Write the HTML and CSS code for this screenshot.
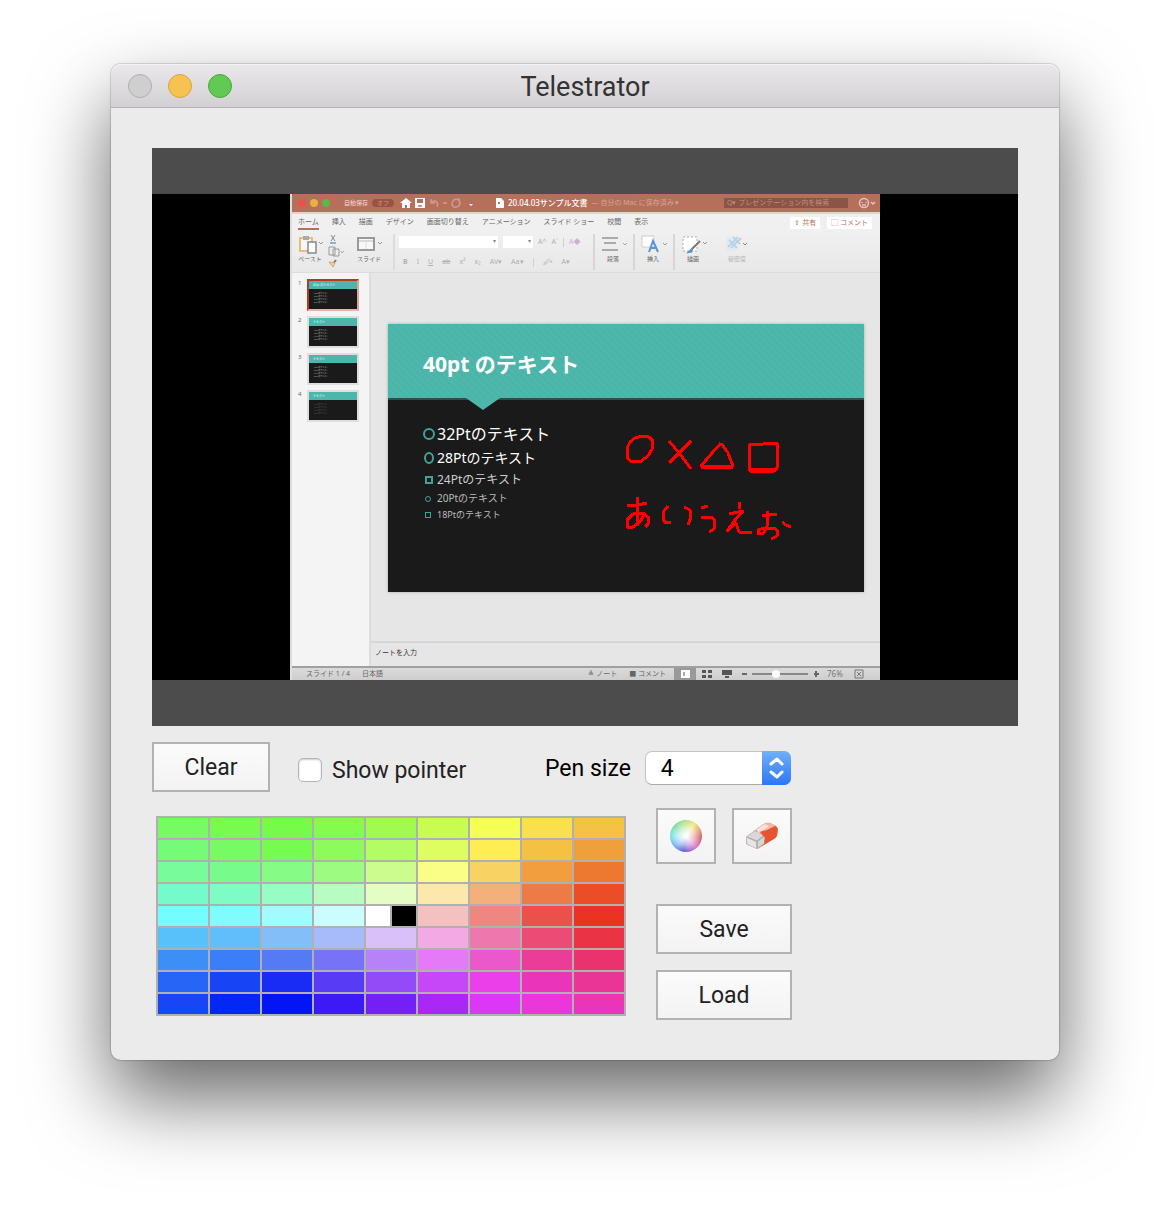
FILE: index.html
```html
<!DOCTYPE html>
<html lang="en">
<head>
<meta charset="utf-8">
<meta name="viewport" content="width=device-width, initial-scale=1">
<title>Telestrator</title>
<link rel="stylesheet" href="styles.css">
</head>
<body>
<main class="window">
  <header class="titlebar">
    <div class="lights">
      <button class="light light-close" aria-label="Close"></button>
      <button class="light light-min" aria-label="Minimize"></button>
      <button class="light light-zoom" aria-label="Zoom"></button>
    </div>
    <h1 class="title">Telestrator</h1>
  </header>

  <div class="content">
    <section class="stage" aria-label="Shared screen">
      <div class="video">
        <div class="ppt" lang="ja">
          <div class="ppt-title">
            <span class="dots"><i class="dot red"></i><i class="dot amber"></i><i class="dot green"></i></span>
            <span class="autosave">自動保存 <i class="toggle">オフ</i></span>
            <svg class="quick" viewBox="0 0 76 14" width="76" height="14" fill="none" stroke="#f3dcd7" stroke-width="1.5"><path fill="#fff" stroke="none" d="M6 2L0 7h2v5h3V9h2v3h3V7h2zM15 2h10v10H15z"/><path d="M17 3h6v4h-6z" fill="#b76f5c" stroke="none"/><path d="M18 10h4" stroke="#b76f5c"/><g stroke="#cf9a8c"><path d="M31 3v4h4M31 7c4-5 8 0 6 4M43 7h4M59 4c-6-3-9 4-5 7c4 1 8-3 5-6v-3"/></g><path d="M69 8l2 2l2-2z" fill="#fff" stroke="none"/></svg>
            <span class="doc"><svg viewBox="0 0 8 10" width="8" height="10"><path fill="#fff" d="M0 0h5l3 3v7H0z"/><path fill="#b76f5c" d="M2 4h2v2H2z"/></svg><b>20.04.03サンプル文書</b> <span class="saved">— 自分の Mac に保存済み ▾</span></span>
            <span class="ppt-search">Q▾ プレゼンテーション内を検索</span>
            <svg class="face" viewBox="0 0 18 12" width="18" height="12" fill="none" stroke="#e7c4bb" stroke-width="1.5"><circle cx="6" cy="6" r="4.5"/><path d="M4 5v1M8 5v1M4 8h4M13 5l2 2l2-2"/></svg>
          </div>
          <div class="tabs">
            <span class="tab current">ホーム</span><span class="tab">挿入</span><span class="tab">描画</span><span class="tab">デザイン</span><span class="tab">画面切り替え</span><span class="tab">アニメーション</span><span class="tab">スライド ショー</span><span class="tab">校閲</span><span class="tab">表示</span>
            <span class="pill first">⇪ 共有</span><span class="pill">▢ コメント</span>
          </div>
          <div class="ribbon">
            <div class="tool paste"><svg viewBox="0 0 26 20" width="26" height="20"><path d="M2 4h12v13H2z" fill="#f6f6f6" stroke="#e8bd78" stroke-width="2"/><path d="M5 2h6v4H5z" fill="#aaa"/><path d="M10 8h8v11h-8z" fill="#fff" stroke="#888" stroke-width="1.5"/><path d="M21 8l2 2l2-2" fill="none" stroke="#999"/></svg><span>ペースト</span></div>
            <svg class="clip" viewBox="0 0 16 34" width="16" height="34" fill="none"><path d="M3 1l4 6M7 1L3 7" stroke="#888"/><path d="M2 9h6" stroke="#8ab2dc" stroke-width="2"/><path d="M1 13h6v8H1zM5 15h6v7H5z" fill="#eee" stroke="#999"/><path d="M13 17l1 2l2-2" stroke="#aaa"/><path d="M8 26L4 31" stroke="#777" stroke-width="2"/><path d="M1 28l6 1l-2 4z" fill="#f6d3aa" stroke="#e3a15e"/></svg>
            <div class="tool slide-tool"><svg viewBox="0 0 26 20" width="26" height="20"><path d="M1 4h16v12H1z" fill="#f8f8f8" stroke="#999" stroke-width="2"/><path d="M2 7h14" stroke="#bbb"/><path d="M9 8v7" stroke="#ddd"/><path d="M21 8l2 2l2-2" fill="none" stroke="#999"/></svg><span>スライド</span></div>
            <div class="fonts">
              <div class="font-row"><i class="box wide">▾</i><i class="box narrow">▾</i><span>A^</span><span>A˅</span><i class="bar"></i><span class="clear-format">A◆</span></div>
              <div class="font-row styles"><b>B</b><i>I</i><u>U</u><s>ab</s><span>x²</span><span>x₂</span><span>AV▾</span><span>Aa▾</span><i class="bar"></i><span>🖉▾</span><span>A▾</span></div>
            </div>
            <div class="tool divided"><svg viewBox="0 0 28 20" width="28" height="20" fill="none" stroke="#aaa" stroke-width="2"><path d="M1 4h16M3 9h12M1 16h16"/><path stroke-width="1" d="M22 9l2 2l2-2"/></svg><span>段落</span></div>
            <div class="tool divided"><svg viewBox="0 0 28 20" width="28" height="20" fill="none"><path d="M1 2h12v11H1z" fill="#fff" stroke="#ccc"/><path d="M8 18l4-11l5 11M10 14h5" stroke="#5b95d5" stroke-width="2"/><path d="M22 9l2 2l2-2" stroke="#999"/></svg><span>挿入</span></div>
            <div class="tool"><svg viewBox="0 0 28 20" width="28" height="20" fill="none"><path d="M2 3h14v14H2z" fill="#fff" stroke="#aaa" stroke-dasharray="2 2"/><path d="M19 7l-9 9" stroke="#777" stroke-width="2"/><path d="M11 14l-5 5l5-1z" fill="#5b95d5" stroke="#5b95d5"/><path d="M22 8l2 2l2-2" stroke="#999"/></svg><span>描画</span></div>
            <div class="tool faded"><svg viewBox="0 0 28 20" width="28" height="20" fill="none"><path d="M1 3h10v14H1z" fill="#e4ebf0"/><path d="M3 13l10-10M6 14l10-10M4 6l8 8M8 3l7 7" stroke="#b9d3e8" stroke-width="2"/><path d="M18 9l2 2l2-2" stroke="#888"/></svg><span>秘密度</span></div>
          </div>
          <div class="workspace">
            <ol class="thumbs">
              <li class="thumb selected"><span class="number">1</span><span class="mini"><b>40pt のテキスト</b><span>32Ptのテキスト<br>28Ptのテキスト<br>24Ptのテキスト<br>20Ptのテキスト</span></span></li>
              <li class="thumb"><span class="number">2</span><span class="mini"><b>テキスト</b><span>32Ptのテキスト<br>28Ptのテキスト<br>24Ptのテキスト<br>20Ptのテキスト</span></span></li>
              <li class="thumb"><span class="number">3</span><span class="mini"><b>テキスト</b><span>32Ptのテキスト<br>28Ptのテキスト<br>24Ptのテキスト<br>20Ptのテキスト</span></span></li>
              <li class="thumb"><span class="number">4</span><span class="mini dim"><b>テキスト</b><span>32Ptのテキスト<br>28Ptのテキスト<br>24Ptのテキスト<br>20Ptのテキスト</span></span></li>
            </ol>
            <div class="editor">
              <article class="slide">
                <h2 class="slide-title">40pt のテキスト</h2>
                <ul class="points">
                  <li class="p32"><i class="bullet round"></i>32Ptのテキスト</li>
                  <li class="p28"><i class="bullet round slim"></i>28Ptのテキスト</li>
                  <li class="p24"><i class="bullet square"></i>24Ptのテキスト</li>
                  <li class="p20"><i class="bullet small round"></i>20Ptのテキスト</li>
                  <li class="p18"><i class="bullet small square"></i>18Ptのテキスト</li>
                </ul>
                <svg class="ink" viewBox="388 324 476 268" role="img" aria-label="Pen drawing: circle, cross, triangle, square, あいうえお">
                  <path d="M635 438L630 442L627 448L627 457L630 461L640 462L648 456L652 449L653 441L649 437L642 436L635 438"/>
                  <path d="M669 441L680 454L691 469M691 441L680 452L669 463"/>
                  <path d="M721 443L712 453L701 466L733 466L728 453L721 443M701 467L733 467"/>
                  <path d="M749 444L750 471L774 471L777 468L777 443L749 445M750 469L774 469"/>
                  <path d="M627 505L638 505L647 503M637 497L637 514L638 526M645 513L640 522L633 527L627 527L627 520L633 514L643 513L649 518L648 524L645 527"/>
                  <path d="M668 506L664 511L663 518L665 523L671 522M684 507L690 510L691 517L688 525"/>
                  <path d="M701 508L708 506M701 518L711 517L715 520L714 529L709 532"/>
                  <path d="M740 502L739 509M729 514L743 511L735 520L727 531L736 523L739 532L746 533L752 532"/>
                  <path d="M762 516L777 514M767 511L767 526L764 533L758 534L758 530L764 528L774 528L778 531L777 536L771 539M782 522L786 525L791 527"/>
                </svg>
              </article>
              <p class="notes">ノートを入力</p>
            </div>
          </div>
          <footer class="status">
            <span class="slide-count">スライド 1 / 4</span><span>日本語</span>
            <span class="notes-toggle">≜ ノート</span><span><b>■</b> コメント</span>
            <svg viewBox="0 0 194 12" width="194" height="12"><path fill="#999" d="M0 0h22v12H0z"/><path d="M7 2h9v8H7z" fill="#fff"/><path d="M9 4h2v4H9z" fill="#aaa"/><path fill="#555" d="M28 2h4v3h-4zM34 2h4v3h-4zM28 7h4v3h-4zM34 7h4v3h-4zM48 2h10v5H48zM51 8h4v2h-4z"/><path d="M68 6h5M140 6h5M142 3v6" stroke="#666" stroke-width="2"/><path d="M78 6h56" stroke="#888" stroke-width="2"/><circle cx="102" cy="6" r="4" fill="#fff"/><text x="153" y="9" font-size="8" fill="#777">76%</text><path d="M181 2h8v8h-8zM183 4l4 4M187 4l-4 4" fill="none" stroke="#777"/></svg>
          </footer>
        </div>
      </div>
    </section>

    <div class="options">
      <button class="btn clear">Clear</button>
      <label class="check"><input type="checkbox" class="checkbox"><span class="check-text">Show pointer</span></label>
      <div class="pen">
        <label class="pen-label" for="pen-size">Pen size</label>
        <span class="select-wrap">
          <select id="pen-size" class="select"><option>1</option><option>2</option><option selected>4</option><option>8</option></select>
          <svg class="arrows" viewBox="0 0 29 34" width="29" height="34" fill="none" stroke="#fff" stroke-width="3" stroke-linecap="round" stroke-linejoin="round" aria-hidden="true"><path d="M9 13l6-5l5 5M9 21l6 5l5-5"/></svg>
        </span>
      </div>
    </div>

    <div class="tools">
      <div class="palette" id="palette" role="group" aria-label="Pen colour"></div>
      <div class="side">
        <div class="icon-row">
          <button class="btn icon" aria-label="Choose colour"><span class="wheel"></span></button>
          <button class="btn icon" aria-label="Eraser">
            <svg viewBox="0 0 34 30" width="34" height="30"><path d="M1 16L19 3Q22 1 25 2L31 5Q33 7 33 9L32 15Q31 17 29 18L14 27Q12 28 10 27L3 24Q1 23 1 20z" fill="#e65432"/><path d="M11 8L19 3Q22 1 25 2L31 5L22 11L13 13z" fill="#f1b7a9"/><path d="M11 9l9-6l4 2l-10 7z" fill="#f6e2dd"/><path d="M14 11l9 3l9-7l-2-2l-8 4z" fill="#e65432"/><path d="M1 16l9-7l5 5l5 2l-1 7l-5 4q-2 1-4 0l-7-3q-2-1-2-4z" fill="#bdbdbd"/><path d="M2 16l8-6l8 4l-6 6z" fill="#d8d8d8"/><path d="M2 17l9 4v6l-7-3q-2-1-2-3z" fill="#e6e6e6"/><path d="M13 21l6-5v6l-6 4z" fill="#d7d7d7"/><path d="M2 16l10 4v7M12 20l7-5" fill="none" stroke="#aaa"/></svg>
          </button>
        </div>
        <button class="btn">Save</button>
        <button class="btn">Load</button>
      </div>
    </div>
  </div>
</main>
<script src="palette.js"></script>
</body>
</html>
```
FILE: styles.css
```css
* { box-sizing: border-box; }
body {
  margin: 0;
  padding: 64px 111px 160px;
  background: #fff;
  font-family: Roboto, "Liberation Sans", sans-serif;
  font-size: 23px;
  line-height: 28px;
  color: #222;
}
button, select, input { margin: 0; font: inherit; color: inherit; }
.window {
  border-radius: 10px;
  background: #ebebeb;
  box-shadow: 0 0 1px 1px rgba(0, 0, 0, .15), 0 38px 80px rgba(0, 0, 0, .6);
}
.titlebar {
  display: grid;
  grid-template-columns: 1fr auto 1fr;
  align-items: center;
  height: 44px;
  padding: 0 17px;
  border-bottom: 1px solid #b4b1b4;
  border-radius: 10px 10px 0 0;
  background: linear-gradient(#eae8ea, #d2d0d2);
  box-shadow: inset 0 1px #f5f4f5;
}
.lights { display: flex; gap: 16px; }
.light { width: 24px; height: 24px; padding: 0; border: 1px solid; border-radius: 50%; }
.light-close { background: #d0cfd0; border-color: #b0aeb0; }
.light-min { background: #f6c251; border-color: #dba23c; }
.light-zoom { background: #61c954; border-color: #4aa83c; }
.title { margin: 0; padding-top: 2px; font-size: 27px; font-weight: 400; color: #333; }
.content { padding: 40px 41px; }

/* shared screen */
.stage { padding: 46px 0; background: #4c4c4c; }
.video { display: flex; justify-content: center; background: #000; }
.ppt {
  display: flex;
  flex-direction: column;
  width: 590px;
  border-left: 2px solid #ddd;
  background: #e6e6e6;
  font: 8px/10px "Noto Sans", "Noto Sans CJK JP", sans-serif;
  color: #666;
  white-space: nowrap;
}
.ppt i { font-style: normal; }
.ppt-title {
  display: flex;
  align-items: center;
  height: 20px;
  padding: 0 4px 0 6px;
  border-bottom: 2px solid #e8cfcc;
  background: #b76f5c;
  color: #f3dcd7;
}
.dots { display: flex; gap: 4px; width: 46px; }
.dot { width: 8px; height: 8px; border-radius: 50%; }
.red { background: #e9524a; }
.amber { background: #e9b040; }
.green { background: #58b947; }
.autosave { display: flex; align-items: center; gap: 4px; width: 56px; font-size: 6px; }
.toggle { padding: 0 5px; border-radius: 4px; background: #985443; color: #c79588; line-height: 8px; }
.doc { display: flex; align-items: center; gap: 4px; margin-left: 20px; width: 228px; }
.doc b { font-weight: 500; color: #fff; }
.saved { color: #d5a496; font-size: 7px; }
.ppt-search { width: 124px; padding-left: 3px; background: #8b5446; color: #c08d80; font-size: 7px; }
.face { margin-left: auto; }
.tabs { display: flex; gap: 13px; align-items: center; height: 18px; padding: 0 8px 0 6px; background: #f0f0f0; font-size: 7px; }
.tab { line-height: 12px; border-bottom: 2px solid transparent; }
.current { border-color: #b76f5c; }
.pill { padding: 0 4px; background: #fff; color: #b76f5c; line-height: 12px; margin-left: -6px; }
.first { margin-left: auto; }
.ribbon {
  display: flex;
  align-items: flex-start;
  height: 41px;
  padding: 2px 0 0 6px;
  border-bottom: 1px solid #dcdcdc;
  background: linear-gradient(#f0f0f0, #e8e8e8);
  font-size: 6px;
}
.tool { display: flex; flex-direction: column; padding-left: 6px; width: 40px; height: 36px; }
.tool span { width: 24px; text-align: center; }
.paste { padding-left: 0; width: 30px; }
.clip { margin-right: 7px; }
.slide-tool { width: 44px; border-right: 2px solid #dcdcdc; }
.fonts { display: flex; flex-direction: column; gap: 7px; width: 200px; height: 36px; padding-left: 4px; border-right: 2px solid #d6d6d6; color: #b0b0b0; }
.font-row { display: flex; align-items: center; height: 12px; gap: 5px; margin-top: 2px; font-size: 7px; }
.styles { gap: 9px; padding-left: 4px; height: 10px; }
.box { height: 12px; background: #fff; text-align: right; padding-right: 2px; color: #888; font-size: 6px; }
.wide { width: 99px; }
.narrow { width: 30px; }
.bar { width: 1px; height: 9px; background: #d0d0d0; }
.clear-format { color: #cbb0d0; }
.divided { border-right: 2px solid #d6d6d6; }
.faded { padding-left: 10px; width: 44px; color: #b5b5b5; }
.workspace { display: flex; height: 393px; }
.thumbs { display: flex; flex-direction: column; gap: 5px; width: 79px; margin: 0; padding: 6px 0 0 6px; border-right: 2px solid #ddd; background: #f4f4f4; list-style: none; }
.thumb { display: flex; align-items: flex-start; gap: 5px; }
.number { width: 4px; font-size: 6px; line-height: 8px; }
.mini { width: 52px; height: 32px; border: 2px solid #dedede; background: #1a1a1a; overflow: hidden; color: #aaa; font-size: 2px; line-height: 3px; }
.mini b { display: block; height: 8px; padding: 3px 4px; background: #4db6aa; color: #d5f2ee; font-size: 3px; line-height: 3px; font-weight: 500; }
.mini span { display: block; padding: 3px 5px; }
.dim { color: #555; }
.selected .mini { border-color: #b33a20 #dea59d #e2b5ae #b33a20; }
.editor { display: flex; flex: 1; flex-direction: column; justify-content: space-between; }
.slide { position: relative; height: 268px; margin: 51px 16px 0 17px; background: #1a1a1a; box-shadow: 0 0 3px #aaa; color: #fff; }
.slide-title {
  height: 76px;
  margin: 0;
  padding: 0 35px;
  border-bottom: 2px solid #2d4f4b;
  background: repeating-linear-gradient(45deg, #4eb7ab 0 3px, #4bb3a7 3px 5px);
  font-size: 21px;
  font-weight: 700;
  line-height: 80px;
}
.slide-title::after { content: ""; position: absolute; left: 78px; top: 74px; border: solid transparent; border-width: 12px 17px 0; border-top-color: #4db6aa; }
.points { margin: 0; padding: 22px 0 0 35px; list-style: none; }
.points li { display: flex; align-items: center; }
.p32 { font-size: 16px; line-height: 24px; }
.p28 { font-size: 14px; line-height: 24px; }
.p24 { font-size: 12px; line-height: 20px; color: #ccc; }
.p20 { font-size: 10px; line-height: 17px; color: #bbb; }
.p18 { font-size: 9px; line-height: 16px; color: #bbb; }
.bullet { width: 12px; height: 12px; margin-right: 2px; border: 2px solid #43a196; }
.round { border-radius: 50%; }
.slim { width: 10px; margin: 0 3px 0 1px; }
.square { width: 8px; height: 8px; margin: 0 4px 0 2px; }
.small { width: 6px; height: 6px; margin: 0 6px 0 2px; border-width: 1px; }
.ink { position: absolute; inset: 0; width: 100%; height: 100%; fill: none; stroke: #f00; stroke-width: 3; stroke-linejoin: round; shape-rendering: crispEdges; }
.notes { height: 25px; margin: 0; padding: 5px 4px; border-top: 2px solid #d6d6d6; color: #333; font-size: 7px; }
.status { display: flex; align-items: center; gap: 12px; height: 14px; padding: 0 12px 0 14px; border-top: 2px solid #a0a0a0; background: linear-gradient(#dadada, #cecece); font-size: 7px; }
.notes-toggle { margin-left: auto; }
.status svg { margin-left: -4px; }

/* controls */
.btn { height: 50px; padding: 2px 0 0; border: 2px solid #b2b2b2; background: linear-gradient(#fbfbfb, #f3f3f3); }
.options { display: flex; align-items: center; margin-top: 16px; }
.clear { width: 118px; margin-right: 28px; }
.check { display: flex; align-items: center; gap: 10px; width: 247px; padding-top: 6px; }
.check-text { padding-top: 2px; }
.checkbox { appearance: none; width: 24px; height: 24px; border: 1px solid #b5b5b5; border-radius: 5px; background: #fff; box-shadow: inset 0 1px 2px #ccc; }
.pen { display: flex; align-items: center; gap: 14px; padding-top: 2px; color: #000; }
.pen-label { padding-top: 2px; }
.select-wrap { position: relative; width: 146px; height: 34px; }
.select { display: block; appearance: none; width: 100%; height: 34px; padding: 2px 15px 0; border: 1px solid #c4c4c4; border-bottom-color: #aaa; border-radius: 7px; background: #fff; }
.arrows { position: absolute; right: 0; top: 0; border-radius: 0 7px 7px 0; background: linear-gradient(#72b0f8, #2b76f7); pointer-events: none; }
.tools { display: flex; gap: 30px; margin-top: 16px; }
.palette {
  display: grid;
  grid-template-columns: repeat(18, 24px);
  grid-auto-rows: 20px;
  gap: 2px;
  align-self: flex-start;
  margin: 8px 0 0 4px;
  padding: 2px;
  background: #b0b0b0;
}
.swatch { grid-column: span 2; padding: 0; border: 0; }
.half { grid-column: span 1; }
.side { display: flex; flex-direction: column; gap: 16px; width: 136px; }
.icon-row { display: flex; gap: 16px; margin-bottom: 24px; }
.icon { display: grid; place-items: center; width: 60px; height: 56px; padding: 0; }
.wheel {
  width: 32px;
  height: 32px;
  border-radius: 50%;
  background: radial-gradient(circle, #fff 5%, rgba(255, 255, 255, .6) 40%, rgba(255, 255, 255, .1) 72%), conic-gradient(#a6dc64, #ece45c 35deg, #e58c5c 65deg, #c84c54 95deg, #d458c4 140deg, #3b48c8 190deg, #5b9cf0 225deg, #58e0e4 270deg, #66d48c 315deg, #a6dc64);
}
```
FILE: palette.js
```javascript
const rows = [
  "#77fb62 #76fb4e #76fb4b #85fb4d #a1fb4e #c9fc51 #f4fe54 #fbe04d #f5c244",
  "#76fb78 #76fb62 #76fb50 #8dfb5c #b4fc63 #ddfd60 #feee54 #f4c143 #f0a03b",
  "#77fb9b #77fb8b #86fb86 #9cfb80 #ccfc8e #fafe86 #f8d263 #f29e3e #ed7931",
  "#75fbcb #7ffbc5 #98fcc5 #b8fcc1 #e3fdc5 #fce8ad #f3b07b #ed7b48 #eb4e27",
  "#74fcfe #80fcfe #a0fcfe #ccfdfe #ffffff #000000 #f5c1c0 #ef8682 #eb514a #ea3323",
  "#58c1fa #62befa #84bef9 #a7bafa #d9c0f9 #f3a9e3 #ee77ae #eb4b74 #ea3345",
  "#3d8ef7 #3c7ef7 #547af6 #7773f6 #b582f8 #e57af8 #eb58cb #eb3c98 #ea336d",
  "#2765f6 #1745f5 #192cf5 #573bf5 #934bf7 #c647f7 #eb40e9 #ea35ba #ea3597",
  "#1746f5 #0328f5 #0314f5 #3c19f5 #7420f5 #aa28f6 #dc37f6 #eb37da #ea35b9"
];

const palette = document.getElementById("palette");
for (const color of rows.join(" ").split(" ")) {
  const swatch = document.createElement("button");
  const neutral = color === "#ffffff" || color === "#000000";
  swatch.className = neutral ? "swatch half" : "swatch";
  swatch.style.backgroundColor = color;
  swatch.setAttribute("aria-label", color);
  palette.append(swatch);
}
```
